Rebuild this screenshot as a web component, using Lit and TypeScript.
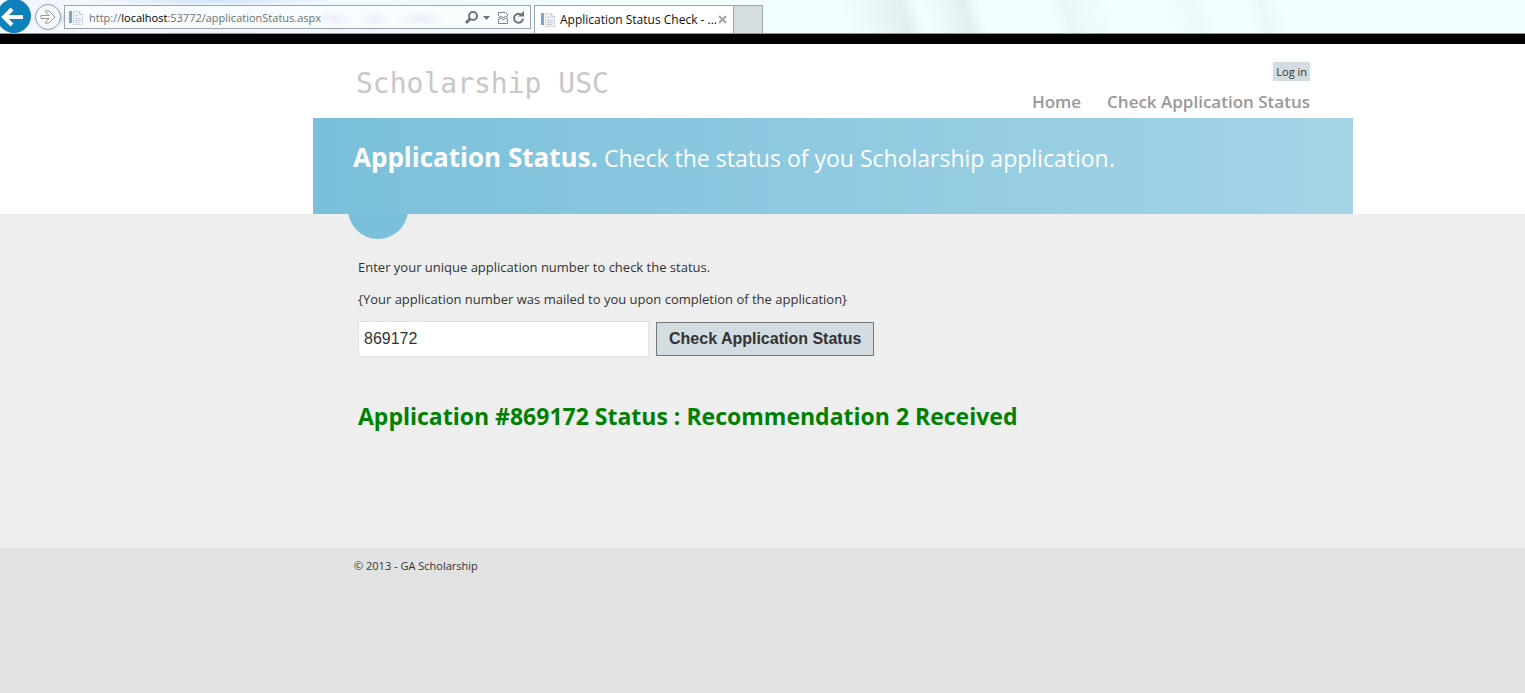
import { LitElement, html, css, svg } from "lit";
import { customElement, property, state } from "lit/decorators.js";

const pageIcon = svg`
  <svg class="favicon" viewBox="0 0 16 16" width="16" height="16" aria-hidden="true">
    <rect x="1" y="1" width="3" height="12" fill="#79a9cd" />
    <path d="M5.500 1.500h6l3 3v10h-9z" fill="#f1f4f6" stroke="#d3d9df" />
    <path d="M11.500 1.500v3h3" fill="none" stroke="#c5ccd3" />
    <path d="M7 5.500h3M7 8.500h6M7 10.500h6M7 12.500h5" stroke="#c5ced7" />
  </svg>`;

@customElement("browser-bar")
export class BrowserBar extends LitElement {
  @property() host = "";
  @property() path = "";
  @property() tabTitle = "";

  static styles = css`
    :host {
      display: block;
      font: 12px/16px "Open Sans", "Noto Sans", sans-serif;
      border-bottom: 1px solid #8f9a9a;
      background:
        radial-gradient(34px 8px at 62px 18px, #d5dcf0, transparent),
        radial-gradient(20px 8px at 334px 19px, #c8d6f0, transparent),
        radial-gradient(16px 8px at 374px 19px, #c8d6f0, transparent),
        radial-gradient(26px 8px at 421px 19px, #c8d6f0, transparent),
        radial-gradient(120px 5px at 215px 0, #cfe0f6, transparent),
        linear-gradient(74deg, transparent 815px, #e4f0f0 874px, transparent 890px,
          transparent 895px, #e4f0f0 934px, transparent 950px,
          transparent 1016px, #eaf7f7 1030px, transparent 1075px,
          transparent 1125px, #edfafa 1155px, transparent 1170px,
          transparent 1205px, #ecf8f8 1220px, transparent 1240px),
        linear-gradient(90deg, #f2f7fc, #eef7fd 240px, #effafd 520px, #f3ffff 620px);
      overflow: hidden;
    }
    .bar {
      display: flex;
      height: 33px;
      align-items: flex-end;
    }
    button {
      padding: 0;
      border: 0;
      background: none;
      display: block;
      flex: none;
    }
    button svg { display: block; }
    .address {
      display: flex;
      align-items: center;
      box-sizing: border-box;
      width: 467px;
      height: 24px;
      margin: 0 3px 4px 2px;
      padding: 2px 4px 0 3px;
      border: 1px solid #9aa4aa;
      background: rgba(255, 255, 255, 0.6);
      color: #6b7075;
    }
    .url { flex: 1; margin-left: 5px; font-size: 11px; white-space: nowrap; }
    .url b { font-weight: 400; color: #000; }
    .tools { display: flex; align-items: center; }
    .favicon { flex: none; }
    .tab {
      display: flex;
      align-items: center;
      box-sizing: border-box;
      width: 200px;
      height: 28px;
      padding: 0 5px;
      border: 1px solid #9aa4aa;
      border-bottom: 0;
      background: #fff;
      color: #111;
    }
    .title { flex: 1; margin-left: 4px; white-space: nowrap; }
    .new {
      box-sizing: border-box;
      width: 29px;
      height: 28px;
      border: 1px solid #9fa8ab;
      border-width: 1px 1px 0 0;
      background: #d5dddf;
    }
  `;

  render() {
    return html`
      <div class="bar">
        <button aria-label="Back">
          <svg width="33" height="33" viewBox="0 0 33 33">
            <circle cx="14" cy="16" r="17" fill="#0f81ba" />
            <path d="M23 17H5M12 9l-8 8 8 8" fill="none" stroke="#fff" stroke-width="4" />
          </svg>
        </button>
        <button aria-label="Forward">
          <svg width="29" height="33" viewBox="0 0 29 33">
            <circle cx="15" cy="17" r="12.5" fill="#f5f9fc" stroke="#8d989f" />
            <path d="M8 15.500h8l-4-4.500h4l6 6-6 6h-4l4-4.500H8z" fill="#fff" stroke="#8d989f" />
          </svg>
        </button>
        <div class="address">
          ${pageIcon}
          <span class="url">http://<b>${this.host}</b>${this.path}</span>
          <div class="tools">
            <button aria-label="Search">
              <svg width="18" height="16" viewBox="0 0 18 16">
                <circle cx="10" cy="6" r="4" fill="none" stroke="#6b7479" stroke-width="2" />
                <path d="M7 9l-4 4" stroke="#6b7479" stroke-width="3" />
              </svg>
            </button>
            <button aria-label="Show address list">
              <svg width="14" height="16" viewBox="0 0 14 16">
                <path d="M2 6h7l-3.500 4z" fill="#6b7479" />
              </svg>
            </button>
            <button aria-label="Compatibility view">
              <svg width="16" height="16" viewBox="0 0 16 16">
                <path d="M3.500 6V2.500h7l2 2V6M3.500 10v3.500h9V10M3 8l3-2 2 2 3-2 2 2M3 10l3-2 2 2 3-2 2 2" fill="none" stroke="#7b8489" />
              </svg>
            </button>
            <button aria-label="Refresh">
              <svg width="15" height="16" viewBox="0 0 15 16">
                <path d="M10 4.500a4.500 4.500 0 1 0 2 4" fill="none" stroke="#6b7479" stroke-width="2" />
                <path d="M7 6.500h6V1z" fill="#6b7479" />
              </svg>
            </button>
          </div>
        </div>
        <div class="tab">
          ${pageIcon}
          <span class="title">${this.tabTitle}</span>
          <button aria-label="Close tab">
            <svg width="10" height="10" viewBox="0 0 10 10">
              <path d="M1 1l7 7M8 1L1 8" stroke="#a3a3a3" stroke-width="2" />
            </svg>
          </button>
        </div>
        <button class="new" aria-label="New tab"></button>
      </div>
    `;
  }
}

@customElement("app-root")
export class AppRoot extends LitElement {
  @state() private applicationNumber = "869172";
  @state() private status = "Application #869172 Status : Recommendation 2 Received";

  static styles = css`
    :host {
      display: flex;
      flex-direction: column;
      min-height: 100vh;
      background: #e2e2e2;
      color: #333;
      font: 13px/20px "Open Sans", "Noto Sans", sans-serif;
    }
    .row {
      display: grid;
      grid-template-columns: 313fr minmax(0, 1040fr) 172fr;
    }
    .row > * { grid-column: 2; }
    header {
      border-top: 10px solid #000;
      background: #fff;
    }
    .top {
      display: flex;
      justify-content: space-between;
      box-sizing: border-box;
      min-height: 74px;
      padding: 18px 43px 0;
    }
    .logo {
      padding-top: 6px;
      color: #c8c8c8;
      font: 28px/32px "DejaVu Sans Mono", monospace;
      text-decoration: none;
    }
    .links {
      display: flex;
      flex-direction: column;
      align-items: flex-end;
      gap: 9px;
    }
    .login {
      padding: 0 3px;
      background: #d3dce0;
      color: #333;
      font-size: 11px;
      line-height: 19px;
      text-decoration: none;
    }
    nav { display: flex; gap: 26px; }
    nav a {
      color: #999;
      font-size: 17px;
      line-height: 24px;
      font-weight: 600;
      text-decoration: none;
    }
    .banner {
      position: relative;
      box-sizing: border-box;
      min-height: 96px;
      padding: 21px 40px;
      background: linear-gradient(90deg, #7ac0da, #a4d4e6);
      color: #fff;
      font-size: 23px;
      line-height: 36px;
    }
    .banner::after {
      content: "";
      position: absolute;
      bottom: -25px;
      left: 35px;
      width: 60px;
      height: 60px;
      border-radius: 50%;
      clip-path: inset(35px 0 0 0);
      background: #7ac0da;
    }
    h1, h2, p { margin: 0; font: inherit; display: inline; }
    h1 { font-size: 26px; font-weight: 700; }
    main { background: #eee; }
    .body {
      box-sizing: border-box;
      min-height: 334px;
      padding: 43px 45px;
    }
    .body p { display: block; margin-bottom: 12px; }
    form { display: flex; align-items: center; gap: 7px; }
    input {
      box-sizing: border-box;
      width: 291px;
      height: 36px;
      padding: 0 5px;
      border: 1px solid #e2e2e2;
      background: #fff;
      color: #333;
      font: 16px "Liberation Sans", sans-serif;
    }
    form button {
      height: 34px;
      padding: 0 12px;
      border: 1px solid #787878;
      background: #d3dce0;
      color: #333;
      font: bold 16px "Liberation Sans", sans-serif;
    }
    h2 {
      display: block;
      margin-top: 43px;
      color: #008000;
      font-size: 23px;
      line-height: 32px;
      font-weight: 700;
    }
    footer p {
      padding: 10px 41px;
      font-size: 11px;
      line-height: 16px;
    }
  `;

  private check(event: Event) {
    event.preventDefault();
    this.status = `Application #${this.applicationNumber} Status : Recommendation 2 Received`;
  }

  render() {
    return html`
      <browser-bar
        host="localhost"
        path=":53772/applicationStatus.aspx"
        tabTitle="Application Status Check - ..."
      ></browser-bar>
      <header class="row">
        <div class="top">
          <a class="logo" href="#">Scholarship USC</a>
          <div class="links">
            <a class="login" href="#">Log in</a>
            <nav>
              <a href="#">Home</a>
              <a href="#">Check Application Status</a>
            </nav>
          </div>
        </div>
        <div class="banner">
          <h1>Application Status.</h1>
          <p>Check the status of you Scholarship application.</p>
        </div>
      </header>
      <main class="row">
        <div class="body">
          <p><label for="number">Enter your unique application number to check the status.</label></p>
          <p>{Your application number was mailed to you upon completion of the application}</p>
          <form @submit=${this.check}>
            <input
              id="number"
              type="text"
              .value=${this.applicationNumber}
              @input=${(e: Event) => (this.applicationNumber = (e.target as HTMLInputElement).value)}
            />
            <button type="submit">Check Application Status</button>
          </form>
          <h2>${this.status}</h2>
        </div>
      </main>
      <footer class="row"><p>© 2013 - GA Scholarship</p></footer>
    `;
  }
}
